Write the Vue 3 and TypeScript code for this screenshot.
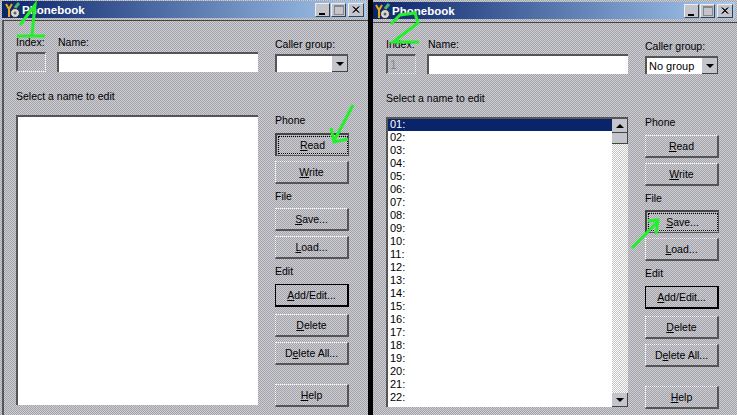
<script setup lang="ts">
type Btn = { pre?: string; key: string; post: string; kind?: string };
type Side = { label?: string; buttons: Btn[] };
type Win = {
  id: number;
  group: string;
  index: string;
  items: string[];
  focused: string;
};

const sides: Side[] = [
  { label: 'Phone', buttons: [{ key: 'R', post: 'ead' }, { key: 'W', post: 'rite' }] },
  { label: 'File', buttons: [{ key: 'S', post: 'ave...' }, { key: 'L', post: 'oad...' }] },
  {
    label: 'Edit',
    buttons: [
      { key: 'A', post: 'dd/Edit...', kind: 'default' },
      { key: 'D', post: 'elete' },
      { pre: 'D', key: 'e', post: 'lete All...' },
    ],
  },
  { buttons: [{ key: 'H', post: 'elp' }] },
];

const numbers = Array.from({ length: 22 }, (_, i) => String(i + 1).padStart(2, '0') + ':');

const windows: Win[] = [
  { id: 1, group: '', index: '', items: [], focused: 'R' },
  { id: 2, group: 'No group', index: '1', items: numbers, focused: 'S' },
];
</script>

<template>
  <div class="screen">
    <section v-for="win in windows" :key="win.id" class="win" :class="'win' + win.id">
      <header class="title">
        <svg class="app-icon" width="16" height="16" viewBox="0 0 16 16">
          <path d="M1 2 L4 7 L7 2 M4 7 V15" fill="none" stroke="#e8a820" stroke-width="2" />
          <path d="M10 6 L14 1" fill="none" stroke="#50b070" stroke-width="3" />
          <circle cx="10" cy="11" r="4.5" fill="#d8d8d8" stroke="#303030" />
          <circle cx="10" cy="11" r="1.5" fill="#606060" />
        </svg>
        <span class="title-text">Phonebook</span>
        <div class="caps">
          <span class="cap"><i class="min"></i></span>
          <span class="cap cap-max"><i class="max"></i></span>
          <svg class="cap cap-close" width="16" height="14" viewBox="0 0 16 14">
            <path d="M4 3 L11 10 M5 3 L12 10 M11 3 L4 10 M12 3 L5 10" stroke="#000" fill="none" />
          </svg>
        </div>
      </header>

      <div class="body">
        <div class="fields">
          <div class="field">
            <label>Index:</label>
            <div class="box index">{{ win.index }}</div>
          </div>
          <div class="field">
            <label class="name-label">Name:</label>
            <div class="box name"></div>
          </div>
          <div class="field group">
            <label>Caller group:</label>
            <div class="box combo">
              <span class="combo-val">{{ win.group }}</span>
              <span class="arrow-btn"><i class="down"></i></span>
            </div>
          </div>
        </div>

        <p class="select-label">Select a name to edit</p>

        <div class="main">
          <div class="list">
            <div class="rows">
              <div v-for="(item, i) in win.items" :key="item" class="row" :class="{ sel: i === 0 }">{{ item }}</div>
            </div>
            <div v-if="win.items.length" class="scroll">
              <span class="arrow-btn sb"><i class="up"></i></span>
              <span class="thumb"></span>
              <span class="track"></span>
              <span class="arrow-btn sb"><i class="down"></i></span>
            </div>
          </div>

          <div class="side">
            <div v-for="(side, s) in sides" :key="s" class="side-group">
              <label v-if="side.label">{{ side.label }}</label>
              <button
                v-for="b in side.buttons"
                :key="b.post"
                class="btn"
                :class="[b.kind, { focus: win.focused === b.key && !b.pre }]"
              >
                <span class="btn-text">{{ b.pre }}<u>{{ b.key }}</u>{{ b.post }}</span>
              </button>
            </div>
          </div>
        </div>
      </div>
    </section>

    <svg class="marks" width="737" height="415" viewBox="0 0 737 415">
      <g fill="none" stroke="#22f02a" stroke-width="3">
        <path d="M20 25 L35 5 L32 35 M17 36 H45" />
        <path d="M353 105 L334 141 M331 128 L334 142 L348 139" />
        <path d="M391 24 L400 15 L415 13 L418 23 L393 42 H419" />
        <path d="M632 248 L657 222 M648 221 L658 220 L656 234" />
      </g>
    </svg>
  </div>
</template>

<style>
html,
body {
  margin: 0;
  background: #000;
}
</style>

<style scoped>
.screen {
  position: relative;
  display: flex;
  width: 737px;
  height: 415px;
  overflow: hidden;
  background: #000;
  font-family: 'Liberation Sans', Arial, sans-serif;
  font-size: 10.5px;
  color: #000;
}

.win {
  display: flex;
  flex-direction: column;
  padding-top: 2px;
  background: url("data:image/svg+xml,%3Csvg xmlns='http://www.w3.org/2000/svg' width='2' height='2'%3E%3Crect width='2' height='2' fill='%23cfcfca'/%3E%3Crect width='1' height='1' fill='%23a2a2b4'/%3E%3Crect x='1' y='1' width='1' height='1' fill='%23a2a2b4'/%3E%3C/svg%3E");
}

.win1 {
  width: 368px;
  padding-top: 1px;
}

.win2 {
  width: 364px;
  margin-left: 5px;
}

.title {
  display: flex;
  align-items: center;
  height: 17px;
  margin: 0 2px;
  padding-left: 3px;
  background: linear-gradient(90deg, #0a246a, #a6caf0);
  color: #fff;
}

.win2 .title {
  margin-left: 0;
  padding-left: 2px;
}

.app-icon {
  flex: none;
}

.title-text {
  margin-left: 1px;
  font-weight: bold;
  font-size: 11.5px;
}

.caps {
  display: flex;
  align-items: center;
  margin-left: auto;
  padding-right: 2px;
}

.cap {
  position: relative;
  display: block;
  box-sizing: border-box;
  width: 15px;
  height: 14px;
  background: #c4c4cc;
  border-right: 1px solid #404040;
  border-bottom: 1px solid #404040;
  border-top: 1px solid #eee;
  border-left: 1px solid #eee;
}

.cap-max {
  margin-left: 1px;
}

.cap-close {
  width: 16px;
  margin-left: 2px;
}

.min {
  position: absolute;
  left: 3px;
  bottom: 1px;
  width: 6px;
  height: 2px;
  background: #000;
}

.max {
  position: absolute;
  left: 2px;
  top: 1px;
  width: 8px;
  height: 7px;
  border: 1px solid #888;
  border-top-width: 2px;
}

.body {
  display: flex;
  flex: 1;
  flex-direction: column;
  margin: 2px 0 0 2px;
  padding: 15px 0 0 12px;
  border-top: 1px solid #444;
  border-left: 2px solid #555;
}

.win2 .body {
  margin: 3px 0 0;
  padding-left: 13px;
  border-left: none;
}

label {
  display: block;
  height: 13px;
  line-height: 13px;
}

.fields {
  display: flex;
  align-items: flex-start;
}

.name-label {
  padding-left: 1px;
}

.box {
  box-sizing: border-box;
  height: 20px;
  margin-top: 3px;
  border-top: 2px solid #555;
  border-left: 2px solid #555;
}

.index {
  width: 30px;
  margin-right: 11px;
  padding-left: 2px;
  border-right: 1px dotted #fff;
  border-bottom: 1px dotted #fff;
  line-height: 18px;
  font-size: 12px;
  color: #8088a0;
}

.name {
  width: 201px;
  background: #fff;
}

.group {
  margin: 2px 0 0 17px;
}

.combo {
  display: flex;
  width: 73px;
  height: 18px;
  background: #fff;
  margin-top: 3px;
}

.combo-val {
  flex: 1;
  padding-left: 2px;
  line-height: 16px;
  font-size: 11px;
}

.arrow-btn {
  display: flex;
  flex: none;
  align-items: center;
  justify-content: center;
  box-sizing: border-box;
  width: 16px;
  height: 16px;
  background: #c4c4cc;
  border-right: 1px solid #444;
  border-bottom: 1px solid #444;
}

.down,
.up {
  width: 0;
  height: 0;
  border-left: 4px solid transparent;
  border-right: 4px solid transparent;
}

.down {
  border-top: 4px solid #000;
}

.up {
  border-bottom: 4px solid #000;
}

.select-label {
  height: 13px;
  margin: 18px 0 0;
  line-height: 13px;
}

.main {
  display: flex;
  align-items: flex-start;
  margin-top: 12px;
}

.list {
  display: flex;
  flex: none;
  box-sizing: border-box;
  width: 242px;
  height: 290px;
  background: #fff;
  border-top: 2px solid #555;
  border-left: 2px solid #555;
  overflow: hidden;
}

.rows {
  flex: 1;
  overflow: hidden;
  margin-top: -1px;
}

.row {
  height: 13px;
  padding-left: 2px;
  line-height: 13px;
  font-size: 11px;
}

.sel {
  background: #0a246a;
  color: #fff;
}

.scroll {
  display: flex;
  flex: none;
  flex-direction: column;
  width: 16px;
  height: 288px;
  background: url("data:image/svg+xml,%3Csvg xmlns='http://www.w3.org/2000/svg' width='2' height='2'%3E%3Crect width='2' height='2' fill='%23fff'/%3E%3Crect width='1' height='1' fill='%23c4c4c4'/%3E%3Crect x='1' y='1' width='1' height='1' fill='%23c4c4c4'/%3E%3C/svg%3E");
}

.sb {
  height: 14px;
}

.thumb {
  height: 10px;
  background: #c4c4cc;
  border-bottom: 1px solid #444;
  border-right: 1px solid #444;
}

.track {
  flex: 1;
}

.side {
  display: flex;
  flex-direction: column;
  margin: -1px 0 0 17px;
}

.side-group {
  display: flex;
  flex-direction: column;
  margin-bottom: 6px;
}

.side-group:first-child label {
  margin-bottom: 1px;
}

.side-group:nth-child(3) {
  margin-bottom: 14px;
}

.btn {
  display: flex;
  align-items: center;
  justify-content: center;
  box-sizing: border-box;
  width: 74px;
  height: 23px;
  margin: 5px 0 0;
  padding: 0;
  background: transparent;
  border: none;
  border-top: 1px dotted #fff;
  border-left: 1px dotted #fff;
  border-right: 2px solid #555;
  border-bottom: 2px solid #555;
  font: inherit;
  color: #000;
}

.default {
  margin: 6px 0 2px;
  border: 1px solid #000;
  border-right-width: 2px;
  border-bottom-width: 2px;
}

.focus {
  border: none;
  border-top: 2px solid #444;
  border-left: 2px solid #444;
  border-right: 1px solid #555;
  border-bottom: 1px solid #555;
}

.focus .btn-text {
  box-sizing: border-box;
  width: 68px;
  padding: 2px 0;
  outline: 1px dotted #000;
  text-align: center;
}

.marks {
  position: absolute;
  left: 0;
  top: 0;
  pointer-events: none;
}
</style>
